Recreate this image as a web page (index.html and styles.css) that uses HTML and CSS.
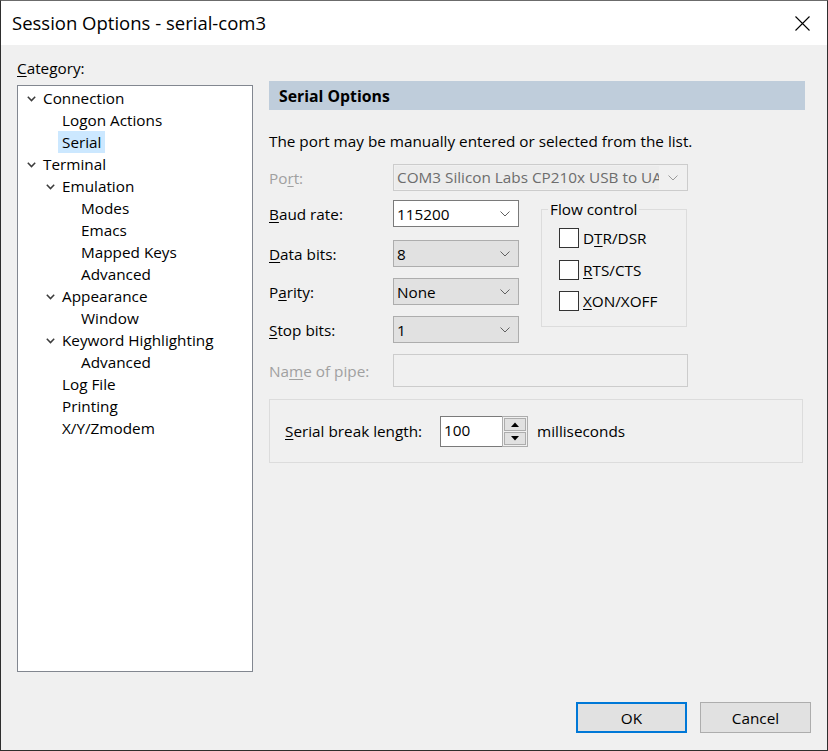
FILE: index.html
```html
<!DOCTYPE html>
<html lang="en">
<head>
<meta charset="utf-8">
<title>Session Options - serial-com3</title>
<link rel="stylesheet" href="styles.css">
</head>
<body>
<div class="window">
  <div class="titlebar">
    <span class="title">Session Options - serial-com3</span>
    <svg class="close" width="15" height="15" viewBox="0 0 15 15"><path d="M0.5 0.5 L14.5 14.5 M14.5 0.5 L0.5 14.5" stroke="#000" stroke-width="1.1" fill="none"/></svg>
  </div>
  <div class="content">
    <div class="main">
      <div class="left">
        <div class="cat-label"><u>C</u>ategory:</div>
        <div class="tree">
          <div class="node l0"><span class="tw"><svg width="9" height="6" viewBox="0 0 9 6"><polyline points="0.8,0.8 4.5,4.6 8.2,0.8" fill="none" stroke="#3c3c3c" stroke-width="1.5"/></svg></span><span class="lbl">Connection</span></div>
          <div class="node l1"><span class="tw"></span><span class="lbl">Logon Actions</span></div>
          <div class="node l1 sel"><span class="tw"></span><span class="lbl">Serial</span></div>
          <div class="node l0"><span class="tw"><svg width="9" height="6" viewBox="0 0 9 6"><polyline points="0.8,0.8 4.5,4.6 8.2,0.8" fill="none" stroke="#3c3c3c" stroke-width="1.5"/></svg></span><span class="lbl">Terminal</span></div>
          <div class="node l1"><span class="tw"><svg width="9" height="6" viewBox="0 0 9 6"><polyline points="0.8,0.8 4.5,4.6 8.2,0.8" fill="none" stroke="#3c3c3c" stroke-width="1.5"/></svg></span><span class="lbl">Emulation</span></div>
          <div class="node l2"><span class="tw"></span><span class="lbl">Modes</span></div>
          <div class="node l2"><span class="tw"></span><span class="lbl">Emacs</span></div>
          <div class="node l2"><span class="tw"></span><span class="lbl">Mapped Keys</span></div>
          <div class="node l2"><span class="tw"></span><span class="lbl">Advanced</span></div>
          <div class="node l1"><span class="tw"><svg width="9" height="6" viewBox="0 0 9 6"><polyline points="0.8,0.8 4.5,4.6 8.2,0.8" fill="none" stroke="#3c3c3c" stroke-width="1.5"/></svg></span><span class="lbl">Appearance</span></div>
          <div class="node l2"><span class="tw"></span><span class="lbl">Window</span></div>
          <div class="node l1"><span class="tw"><svg width="9" height="6" viewBox="0 0 9 6"><polyline points="0.8,0.8 4.5,4.6 8.2,0.8" fill="none" stroke="#3c3c3c" stroke-width="1.5"/></svg></span><span class="lbl">Keyword Highlighting</span></div>
          <div class="node l2"><span class="tw"></span><span class="lbl">Advanced</span></div>
          <div class="node l1"><span class="tw"></span><span class="lbl">Log File</span></div>
          <div class="node l1"><span class="tw"></span><span class="lbl">Printing</span></div>
          <div class="node l1"><span class="tw"></span><span class="lbl">X/Y/Zmodem</span></div>
        </div>
      </div>
      <div class="right">
        <div class="header">Serial Options</div>
        <p class="desc">The port may be manually entered or selected from the list.</p>
        <div class="row port-row">
          <span class="label disabled-label">Po<u>r</u>t:</span>
          <div class="combo long disabled">
            <span class="val">COM3 Silicon Labs CP210x USB to UART Bridge (COM3)</span>
            <svg width="10" height="6" viewBox="0 0 10 6"><polyline points="0.5,0.5 5,5 9.5,0.5" fill="none" stroke="#9a9a9a" stroke-width="1"/></svg>
          </div>
        </div>
        <div class="settings">
          <div class="fields">
            <div class="row">
              <span class="label"><u>B</u>aud rate:</span>
              <div class="combo short edit"><span class="val">115200</span><svg width="10" height="6" viewBox="0 0 10 6"><polyline points="0.5,0.5 5,5 9.5,0.5" fill="none" stroke="#606060" stroke-width="1"/></svg></div>
            </div>
            <div class="row r-data">
              <span class="label"><u>D</u>ata bits:</span>
              <div class="combo short"><span class="val">8</span><svg width="10" height="6" viewBox="0 0 10 6"><polyline points="0.5,0.5 5,5 9.5,0.5" fill="none" stroke="#606060" stroke-width="1"/></svg></div>
            </div>
            <div class="row r-next">
              <span class="label">P<u>a</u>rity:</span>
              <div class="combo short"><span class="val">None</span><svg width="10" height="6" viewBox="0 0 10 6"><polyline points="0.5,0.5 5,5 9.5,0.5" fill="none" stroke="#606060" stroke-width="1"/></svg></div>
            </div>
            <div class="row r-next">
              <span class="label"><u>S</u>top bits:</span>
              <div class="combo short"><span class="val">1</span><svg width="10" height="6" viewBox="0 0 10 6"><polyline points="0.5,0.5 5,5 9.5,0.5" fill="none" stroke="#606060" stroke-width="1"/></svg></div>
            </div>
          </div>
          <fieldset class="flow">
            <legend>Flow control</legend>
            <div class="flow-body">
              <div class="cb-row"><span class="cb"></span><span>D<u>T</u>R/DSR</span></div>
              <div class="cb-row cb-2"><span class="cb"></span><span><u>R</u>TS/CTS</span></div>
              <div class="cb-row cb-3"><span class="cb"></span><span><u>X</u>ON/XOFF</span></div>
            </div>
          </fieldset>
        </div>
        <div class="row pipe-row">
          <span class="label disabled-label">Na<u>m</u>e of pipe:</span>
          <div class="pipe-box"></div>
        </div>
        <div class="break-group">
          <span class="break-label"><u>S</u>erial break length:</span>
          <div class="spin">
            <div class="spin-edit">100</div>
            <div class="spin-btns">
              <div class="spin-btn"><svg width="8" height="5" viewBox="0 0 8 5"><polygon points="0,5 4,0.5 8,5" fill="#000"/></svg></div>
              <div class="spin-btn"><svg width="8" height="5" viewBox="0 0 8 5"><polygon points="0,0 4,4.5 8,0" fill="#000"/></svg></div>
            </div>
          </div>
          <span class="unit">milliseconds</span>
        </div>
      </div>
    </div>
    <div class="buttons">
      <button class="btn default" type="button">OK</button>
      <button class="btn" type="button">Cancel</button>
    </div>
  </div>
</div>
</body>
</html>
```
FILE: styles.css
```css
* { box-sizing: border-box; }
html, body { margin: 0; padding: 0; }
body {
  width: 828px;
  height: 751px;
  font-family: "Open Sans", "Noto Sans", sans-serif;
  font-size: 15.3px;
  color: #000;
  background: #f0f0f0;
  overflow: hidden;
}
u { text-underline-offset: 2px; text-decoration-thickness: 1px; }

.window {
  width: 828px;
  height: 751px;
  border: 1px solid #2e2e2e;
  border-top-color: #6b6b6b;
  display: flex;
  flex-direction: column;
  background: #f0f0f0;
}
.titlebar {
  height: 44px;
  flex: none;
  background: #fff;
  display: flex;
  align-items: center;
  padding: 0 17px 0 11px;
}
.title { font-size: 18.5px; line-height: 24px; }
.close { margin-left: auto; display: block; }

.content { flex: 1; display: flex; flex-direction: column; }
.main { flex: 1; display: flex; padding-left: 16px; }

.left { width: 236px; flex: none; display: flex; flex-direction: column; }
.cat-label { margin-top: 13px; line-height: 20px; height: 20px; }
.tree {
  margin-top: 7px;
  height: 587px;
  border: 1px solid #828790;
  background: #fff;
  padding-top: 1px;
}
.node { height: 22px; display: flex; align-items: center; line-height: 22px; white-space: nowrap; }
.l0 { padding-left: 9px; }
.l1 { padding-left: 28px; }
.l2 { padding-left: 47px; }
.tw { width: 12px; flex: none; display: flex; align-items: center; padding-top: 2px; }
.tw svg { display: block; }
.lbl { padding: 0 4px; }
.sel .lbl { background: #cce8ff; }

.right { margin-left: 16px; width: 536px; flex: none; display: flex; flex-direction: column; }
.header {
  margin-top: 36px;
  height: 29px;
  background: #bfcddb;
  font-weight: 700;
  font-size: 15.8px;
  padding-left: 10px;
  display: flex;
  align-items: center;
}
.desc { margin: 21px 0 0; line-height: 20px; }

.row { display: flex; align-items: center; height: 27px; }
.label { width: 124px; flex: none; }
.disabled-label { color: #a0a0a0; }
.port-row { margin-top: 13px; }

.combo {
  height: 27px;
  border: 1px solid #adadad;
  background: #e1e1e1;
  display: flex;
  align-items: center;
  padding: 0 8px 0 3px;
}
.combo svg { display: block; flex: none; }
.combo .val { flex: 1; overflow: hidden; white-space: nowrap; }
.combo.short { width: 126px; }
.combo.long { width: 295px; }
.combo.edit { background: #fff; border-color: #7a7a7a; }
.combo.disabled { border-color: #cccccc; background: #f0f0f0; color: #6d6d6d; padding: 0 9px 0 1px; }
.combo.disabled .val { background: #ececec; padding-left: 2px; margin-right: 9px; line-height: 23px; }

.settings { display: flex; align-items: flex-start; margin-top: 9px; }
.fields { width: 250px; flex: none; display: flex; flex-direction: column; }
.r-data { margin-top: 13px; }
.r-next { margin-top: 11px; }

.flow {
  margin: 0 0 0 22px;
  width: 146px;
  padding: 0;
  border: 1px solid #dcdcdc;
  min-width: 0;
}
.flow legend { margin-left: 6px; padding: 0 2px; line-height: 18px; }
.flow-body { padding: 8px 0 13px 17px; }
.cb-row { display: flex; align-items: center; height: 24px; }
.cb-2 { margin-top: 8px; }
.cb-3 { margin-top: 7px; }
.cb { width: 20px; height: 20px; border: 1px solid #333; background: #fff; margin-right: 4px; flex: none; }

.pipe-row { margin-top: 11px; height: 33px; }
.pipe-box { width: 295px; height: 33px; border: 1px solid #cccccc; background: #f0f0f0; }

.break-group {
  margin-top: 12px;
  width: 534px;
  height: 64px;
  border: 1px solid #dcdcdc;
  display: flex;
  align-items: center;
  padding-left: 15px;
}
.break-label { width: 155px; flex: none; }
.spin { display: flex; height: 31px; }
.spin-edit {
  width: 62px;
  height: 31px;
  border: 1px solid #7a7a7a;
  border-right: none;
  background: #fff;
  padding: 3px 0 0 3px;
  line-height: 20px;
}
.spin-btns {
  width: 26px;
  height: 31px;
  border: 1px solid #adadad;
  background: #f0f0f0;
  display: flex;
  flex-direction: column;
  gap: 1px;
  padding: 1px;
}
.spin-btn {
  flex: 1;
  background: #e1e1e1;
  border: 1px solid #adadad;
  display: flex;
  align-items: center;
  justify-content: center;
}
.spin-btn svg { display: block; }
.unit { margin-left: 9px; }

.buttons {
  flex: none;
  display: flex;
  justify-content: flex-end;
  gap: 13px;
  padding: 0 16px 17px 0;
}
.btn {
  width: 111px;
  height: 31px;
  font: inherit;
  color: #000;
  background: #e1e1e1;
  border: 1px solid #adadad;
  padding: 0;
  margin: 0;
}
.btn.default { border: 2px solid #0078d7; }
```
